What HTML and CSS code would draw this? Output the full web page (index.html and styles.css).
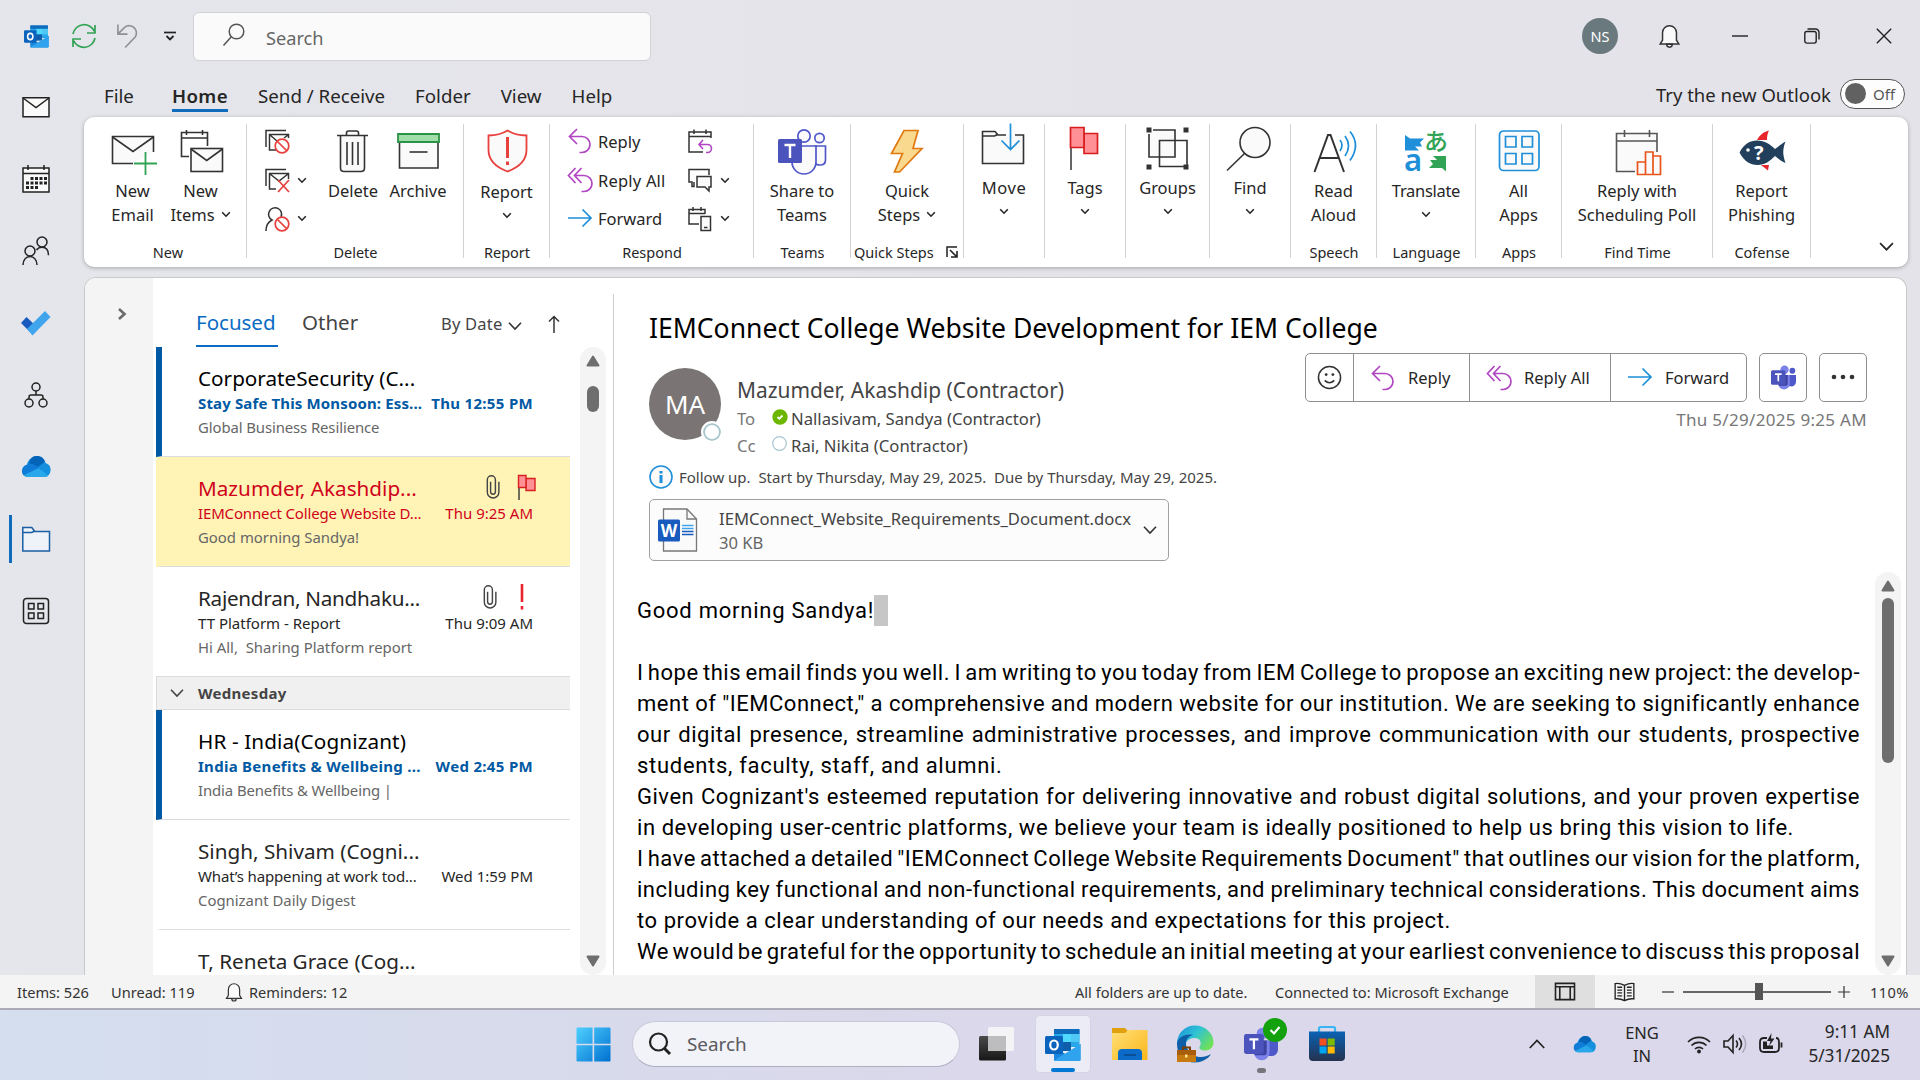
FILE: index.html
```html
<!DOCTYPE html>
<html lang="en">
<head>
<meta charset="utf-8">
<title>Inbox - Outlook</title>
<link rel="stylesheet" href="styles.css">
</head>
<body>
<svg class="defs" aria-hidden="true">
  <defs>
    <linearGradient id="win" x1="0" y1="0" x2="1" y2="1"><stop offset="0" stop-color="#4fd0ff"/><stop offset="1" stop-color="#0070d0"/></linearGradient>
    <linearGradient id="fold" x1="0" y1="0" x2="1" y2="1"><stop offset="0" stop-color="#ffe07a"/><stop offset="1" stop-color="#fbb616"/></linearGradient>
    <linearGradient id="edge" x1="0" y1="0" x2="1" y2="0.6"><stop offset="0" stop-color="#1a8fd8"/><stop offset=".5" stop-color="#2fc2d6"/><stop offset="1" stop-color="#6fe05a"/></linearGradient>
    <linearGradient id="store" x1="0" y1="0" x2="0" y2="1"><stop offset="0" stop-color="#0a62b4"/><stop offset="1" stop-color="#24324f"/></linearGradient>
    <linearGradient id="dark" x1="0" y1="0" x2="0" y2="1"><stop offset="0" stop-color="#4a4a4a"/><stop offset="1" stop-color="#171717"/></linearGradient>
    <symbol id="chev" viewBox="0 0 10 7"><path d="M1.200 1.200 5 5.200 8.800 1.200" fill="none" stroke="currentColor" stroke-width="1.600"/></symbol>
    <symbol id="chevthin" viewBox="0 0 14 10"><path d="M1 1.800 7 8 13 1.800" fill="none" stroke="currentColor" stroke-width="1.600"/></symbol>
    <symbol id="reply" viewBox="0 0 26 26"><path d="M10 1 2.500 8.500 10 16M2.500 8.500H15a8 8 0 0 1 0 16h-2.500" fill="none" stroke="#b146c2" stroke-width="1.700"/></symbol>
    <symbol id="replyall" viewBox="0 0 26 26"><path d="M8.500 1 1.500 8.500 8.500 16M14.500 1 7.500 8.500 14.500 16M7.500 8.500H17a8 8 0 0 1 0 16h-2.500" fill="none" stroke="#b146c2" stroke-width="1.700"/></symbol>
    <symbol id="forward" viewBox="0 0 26 26"><path d="M1 12H24M15.500 3.500 24 12 15.500 20.500" fill="none" stroke="#1e8fd8" stroke-width="1.700"/></symbol>
    <symbol id="cloud" viewBox="0 0 32 24"><path d="M7 23a7 7 0 0 1-1-13.500C8 3 13 0 17 0c5 0 8.500 3 9.500 7.500A8 8 0 0 1 25 23z" fill="#1490df"/><path d="M8 8C10 2 13 0 17 0c4.500 0 7.500 2.500 8.500 6.500L18 12z" fill="#0364b8"/><path d="M6 9.500c3-1.500 6-1 8 0l8 5L3 21.500A7 7 0 0 1 6 9.500z" fill="#0f7cd8"/><path d="M2.500 21 19 13l10.500 8.500c-1 1-2.500 1.500-4.500 1.500H7c-2 0-3.500-.8-4.500-2z" fill="#28a8ea"/></symbol>
    <symbol id="outlook" viewBox="0 0 36 36"><path d="M10 2h23a1.500 1.500 0 0 1 1.500 1.500V20H9V3.500A1.500 1.500 0 0 1 10 2z" fill="#28a8ea"/><path d="M9 2h25.500v5H9z" fill="#0f6cbd"/><path d="M18 7h8v8h-8z" fill="#50d9ff"/><path d="M26 7h8.500v8H26z" fill="#50c8f5"/><path d="M9 15h17v9H9z" fill="#0f5eab"/><path d="M9 20 22 28 35.500 17v15.500A1.500 1.500 0 0 1 34 34H10.500A1.500 1.500 0 0 1 9 32.500z" fill="#1687dc"/><path d="M35.500 17 9 33.500c.5.500 1 .5 1.500.5H34a1.500 1.500 0 0 0 1.500-1.500z" fill="#2fa3ee"/><rect x="0" y="9" width="18" height="18" rx="1.500" fill="#0a64bd"/><ellipse cx="9" cy="18" rx="3.800" ry="4.500" fill="none" stroke="#fff" stroke-width="2.200"/></symbol>
    <symbol id="teams" viewBox="0 0 24 24"><circle cx="13" cy="4.500" r="4" fill="#7b83eb"/><circle cx="20.500" cy="5.500" r="2.800" fill="#5059c9"/><path d="M16 9.500h8V16a4.500 4.500 0 0 1-5 4.500h-3z" fill="#5059c9"/><path d="M7 9.500h11V18a5.500 5.500 0 0 1-11 0z" fill="#7b83eb"/><path d="M7 9.500h9V18q0 2-2 2H7.500z" fill="#3c43a0"/><rect y="5" width="14" height="14" rx="1.500" fill="#4b53bc"/><path d="M3.800 8.700h6.400M7 8.700v7" stroke="#fff" stroke-width="1.600"/></symbol>
    <symbol id="clip" viewBox="0 0 14 26"><path d="M4.500 8v10.500a2.500 2.500 0 0 0 5 0V6a4.200 4.200 0 0 0-8.400 0v13a6 6 0 0 0 12 0V8" fill="none" stroke="#444" stroke-width="1.500"/></symbol>
    <symbol id="bell" viewBox="0 0 24 28"><path d="M2 22.500h20l-2.500-4V10.500a7.500 7.500 0 0 0-15 0v8z" fill="#fafafa" stroke="#333" stroke-width="1.600"/><path d="M9 23a3 3 0 0 0 6 0z" fill="#fafafa" stroke="#333" stroke-width="1.600"/></symbol>
    <symbol id="no" viewBox="0 0 16 16"><circle cx="8" cy="8" r="6.800" fill="#fff" stroke="#e8403c" stroke-width="1.700"/><path d="M3.500 3.500l9 9" stroke="#e8403c" stroke-width="1.700"/></symbol>
    <symbol id="up" viewBox="0 0 14 12"><path d="M7 1.500 12.500 10.500H1.500z" fill="#6e6e6e" stroke="#6e6e6e" stroke-width="2" stroke-linejoin="round"/></symbol>
    <symbol id="flag" viewBox="0 0 30 44"><path d="M2 2v42" stroke="#333" stroke-width="1.500"/><path d="M15 7.500h13.500v20H15z" fill="#ff9095" stroke="#d81e1e" stroke-width="1.700"/><path d="M1.500 1.500H15v20H1.500z" fill="#ff9095" stroke="#d81e1e" stroke-width="1.700"/></symbol>
  </defs>
</svg>

<div class="app">
  <header class="titlebar">
    <div class="quick">
      <svg class="q-outlook"><use href="#outlook"/></svg>
      <svg class="q-sync" viewBox="0 0 26 26"><path d="M2 11A11.300 11.300 0 0 1 23.500 8.500M24 2v8h-8M24 15A11.300 11.300 0 0 1 2.500 17.500M2 24v-8h8" fill="none" stroke="#31a354" stroke-width="1.700"/></svg>
      <svg class="q-undo" viewBox="0 0 24 26"><path d="M2 1v10h10M2.500 10.500 9 4a7.500 7.500 0 0 1 11 10L9.500 25" fill="none" stroke="#909094" stroke-width="1.700"/></svg>
      <svg class="q-more" viewBox="0 0 12 12"><path d="M0 2.500h12" stroke="#222" stroke-width="1.700"/><path d="M2.500 6 6 9.500 9.500 6" fill="none" stroke="#222" stroke-width="1.800"/></svg>
    </div>
    <div class="searchbox">
      <svg class="s-icon" viewBox="0 0 24 24"><circle cx="14.500" cy="8.500" r="7.300" fill="none" stroke="#555" stroke-width="1.500"/><path d="M9.300 13.700 1.500 22.500" stroke="#555" stroke-width="1.500"/></svg>
      <span>Search</span>
    </div>
    <div class="winctl">
      <span class="me">NS</span>
      <svg class="w-bell"><use href="#bell"/></svg>
      <svg class="w-btn" viewBox="0 0 16 16"><path d="M0 8h16" stroke="#222" stroke-width="1.400"/></svg>
      <svg class="w-btn" viewBox="0 0 16 16"><path d="M3.500 1h8A3.500 3.500 0 0 1 15 4.500v7" fill="none" stroke="#222" stroke-width="1.400"/><rect x=".8" y="3.500" width="11.400" height="11.600" rx="2" fill="none" stroke="#222" stroke-width="1.400"/></svg>
      <svg class="w-btn" viewBox="0 0 16 16"><path d="M.8.8 15.200 15.200M15.200.8.8 15.200" stroke="#222" stroke-width="1.400"/></svg>
    </div>
  </header>

  <div class="middle">
    <nav class="rail">
      <div><svg viewBox="0 0 32 32" class="r-ic"><path d="M3 6.700h26v19H3z" fill="#fafafa" stroke="#222" stroke-width="1.500"/><path d="M3 7l13 9.500L29 7" fill="none" stroke="#222" stroke-width="1.500"/></svg></div>
      <div><svg viewBox="0 0 32 32" class="r-ic"><path d="M3 5h26v24H3z" fill="#fafafa" stroke="#222" stroke-width="1.500"/><path d="M3 10.500h26M8 2v5M24 2v5" stroke="#222" stroke-width="1.500"/><path d="M10.500 15.500h16.500M6 20h21M6 24.500h12" stroke="#222" stroke-width="3" stroke-dasharray="3 1.500"/></svg></div>
      <div><svg viewBox="0 0 32 32" class="r-ic"><g fill="none" stroke="#222" stroke-width="1.500"><circle cx="10" cy="16" r="5"/><path d="M3 30c0-5 3-8.500 7-8.500s7 3.500 7 8.500"/><circle cx="22" cy="7" r="5"/><path d="M16.500 15c1.500-2 3-2.700 5.500-2.700 4 0 6.500 3 6.500 8"/></g></svg></div>
      <div><svg viewBox="0 0 32 32" class="r-ic"><path d="M1 16l5.500-6 9.500 9-6 6z" fill="#185abd"/><path d="M9.500 25 7 22 25 4l5.500 6-18 18.500z" fill="#41a5ee"/></svg></div>
      <div><svg viewBox="0 0 32 32" class="r-ic"><g fill="none" stroke="#222" stroke-width="1.500"><circle cx="16" cy="8" r="4"/><circle cx="9" cy="24" r="4"/><circle cx="23" cy="24" r="4"/><path d="M16 12v4M9 20v-2q0-2 2-2h10q2 0 2 2v2"/></g></svg></div>
      <div><svg viewBox="0 0 32 32" class="r-ic"><use href="#cloud" x="0" y="5" width="32" height="22"/></svg></div>
      <div class="on"><svg viewBox="0 0 32 32" class="r-ic"><path d="M2.800 4.500h9l3 4H29.500v19.500H2.800z" fill="#eef3f9" stroke="#1a5fa5" stroke-width="1.500"/><path d="M2.800 9.500h9l3-1.500" fill="none" stroke="#1a5fa5" stroke-width="1.500"/></svg></div>
      <div><svg viewBox="0 0 32 32" class="r-ic"><g fill="none" stroke="#222" stroke-width="1.500"><rect x="3.500" y="3.500" width="25" height="25" rx="3"/><path d="M8.500 8.500h5.500v5.500H8.500zM18 8.500h5.500v5.500H18zM8.500 18h5.500v5.500H8.500zM18 18h5.500v5.500H18z"/></g></svg></div>
    </nav>

    <div class="stage">
      <div class="tabs">
        <span>File</span><b>Home</b><span>Send / Receive</span><span>Folder</span><span>View</span><span>Help</span>
        <div class="trynew"><span>Try the new Outlook</span><span class="toggle"><i></i>Off</span></div>
      </div>

      <section class="ribbon">
        <div class="grp g-new">
          <div class="gb">
            <div class="big"><svg class="ic" viewBox="0 0 48 48"><path d="M44.500 24V8.500H3.500v27H24" fill="#fafafa" stroke="#333" stroke-width="1.600"/><path d="M3.500 9 24 23.500 44.500 9" fill="none" stroke="#333" stroke-width="1.600"/><path d="M36.500 24v23M25 35.500h23" stroke="#31a354" stroke-width="1.800"/></svg><span>New</span><span>Email</span></div>
            <div class="big b-items"><svg class="ic" viewBox="0 0 48 48"><path d="M12 28.500H4.500V4.500h26V18M4.500 10h26M9.500 2v5M25.500 2v5" fill="none" stroke="#333" stroke-width="1.600"/><rect x="14" y="20.500" width="31.500" height="23" fill="#fafafa" stroke="#333" stroke-width="1.600"/><path d="M14 21l15.700 11.500L45.500 21" fill="none" stroke="#333" stroke-width="1.600"/></svg><span>New</span><span>Items <svg class="cv"><use href="#chev"/></svg></span></div>
          </div>
          <div class="gl">New</div>
        </div>
        <div class="grp g-del">
          <div class="gb">
            <div class="small s1">
              <div><svg class="sm" viewBox="0 0 26 26"><path d="M2 19V2.500h20" fill="none" stroke="#333" stroke-width="1.500"/><path d="M12 22H5.500V6.500h19V10M6 7l7 6M24 7l-4 3" fill="none" stroke="#333" stroke-width="1.500"/><use href="#no" x="10" y="10" width="16" height="16"/></svg></div>
              <div><svg class="sm" viewBox="0 0 26 26"><path d="M2 19V2.500h20" fill="none" stroke="#333" stroke-width="1.500"/><path d="M12 22H5.500V6.500h19V12M6 7l9 7L24 7" fill="none" stroke="#333" stroke-width="1.500"/><path d="M14 13l11 12M25 13 14 25" stroke="#e8403c" stroke-width="1.700"/></svg><svg class="cv"><use href="#chev"/></svg></div>
              <div><svg class="sm" viewBox="0 0 26 26"><path d="M2 25c0-6 2-9 6-11A6.500 6.500 0 1 1 17 11" fill="none" stroke="#333" stroke-width="1.500"/><use href="#no" x="10" y="10" width="16" height="16"/></svg><svg class="cv"><use href="#chev"/></svg></div>
            </div>
            <div class="big b-del"><svg class="ic" viewBox="0 0 48 48"><path d="M11.500 8h24v32q0 3.500-3.500 3.500H15q-3.500 0-3.500-3.500z" fill="#fafafa"/><path d="M8 7.500h31M17.500 7V5q0-2 2-2h8q2 0 2 2v2M11.500 8v32q0 3.500 3.500 3.500h17q3.500 0 3.500-3.500V8M18 14v23M23.500 14v23M29 14v23" fill="none" stroke="#333" stroke-width="1.600"/></svg><span>Delete</span></div>
            <div class="big"><svg class="ic" viewBox="0 0 48 48"><path d="M5.500 14v26h38.500V14" fill="#fafafa" stroke="#333" stroke-width="1.600"/><path d="M4 6h41v8H4z" fill="#a1dda8" stroke="#2b9345" stroke-width="1.800"/><path d="M15.500 24h18" stroke="#333" stroke-width="1.600"/></svg><span>Archive</span></div>
          </div>
          <div class="gl">Delete</div>
        </div>
        <div class="grp g-rep">
          <div class="gb"><div class="big lo"><svg class="ic" viewBox="0 0 48 48"><path d="M24.500 2.500C19 6 13 7.500 5.500 7.500V22c0 10 7 17 19 21.500C36.500 39 43.500 32 43.500 22V7.500C36 7.500 30 6 24.500 2.500z" fill="#fafafa" stroke="#e8403c" stroke-width="1.800"/><path d="M24.500 9v21M24.500 33.500v3.500" stroke="#e8403c" stroke-width="3"/></svg><span>Report</span><svg class="cv"><use href="#chev"/></svg></div></div>
          <div class="gl">Report</div>
        </div>
        <div class="grp g-resp">
          <div class="gb">
            <div class="small s2">
              <div><svg class="sm"><use href="#reply"/></svg><span>Reply</span></div>
              <div><svg class="sm"><use href="#replyall"/></svg><span class="ra">Reply All</span></div>
              <div><svg class="sm"><use href="#forward"/></svg><span>Forward</span></div>
            </div>
            <div class="small s3">
              <div><svg class="sm" viewBox="0 0 26 26"><path d="M16 24H2V4h22v6M2 8.500h22M7 1.500V6M19 1.500V6" fill="none" stroke="#333" stroke-width="1.500"/><path d="M16 12l-4 4.500 4 4.500M12 16.500h8.500a4 4 0 0 1 0 8H19" fill="none" stroke="#b146c2" stroke-width="1.600"/></svg></div>
              <div><svg class="sm" viewBox="0 0 26 26"><path d="M7 15v4.500H5V15H2V2.500h20V8" fill="none" stroke="#333" stroke-width="1.500"/><path d="M10 9.500h14V20h-2v4l-4-4h-8z" fill="#fafafa" stroke="#333" stroke-width="1.500"/></svg><svg class="cv"><use href="#chev"/></svg></div>
              <div><svg class="sm" viewBox="0 0 26 26"><path d="M12 18H2V3.500h16V8M2 7.500h16M6 1v4M14 1v4" fill="none" stroke="#333" stroke-width="1.500"/><rect x="14" y="10.500" width="9.500" height="14" fill="#fafafa" stroke="#333" stroke-width="1.500"/><path d="M17 21.500h3.500" stroke="#333" stroke-width="1.500"/></svg><svg class="cv"><use href="#chev"/></svg></div>
            </div>
          </div>
          <div class="gl">Respond</div>
        </div>
        <div class="grp g-teams">
          <div class="gb"><div class="big"><svg class="ic" viewBox="0 0 48 48"><g fill="#fafafa" stroke="#5059c9" stroke-width="1.700"><circle cx="26" cy="8" r="6.200"/><circle cx="41.500" cy="10" r="4.700"/><path d="M37 18h10.500v14q0 5-5.500 5-4 0-5-2z"/><path d="M14 18h24v16a12 12 0 0 1-24 0z"/></g><rect x="0" y="11" width="24" height="24" rx="1.500" fill="#4b53bc"/><path d="M6.500 17h11M12 17v13" stroke="#fff" stroke-width="2.400"/></svg><span>Share to</span><span>Teams</span></div></div>
          <div class="gl">Teams</div>
        </div>
        <div class="grp g-quick">
          <div class="gb"><div class="big"><svg class="ic" viewBox="0 0 48 48"><path d="M21 2.500h14L30 20.500h9L16.500 44h-5l8-18.500H8.500z" fill="#f8d98e" stroke="#e07a10" stroke-width="1.700"/></svg><span>Quick</span><span>Steps <svg class="cv"><use href="#chev"/></svg></span></div></div>
          <div class="gl gl-q"><span>Quick Steps</span><svg class="launch" viewBox="0 0 12 12"><path d="M1 11V1h10" fill="none" stroke="#222" stroke-width="1.500"/><path d="M4 4l6.500 6.500M11 5v6H5" fill="none" stroke="#222" stroke-width="1.600"/></svg></div>
        </div>
        <div class="grp g-81"><div class="gb"><div class="big hi"><svg class="ic" viewBox="0 0 48 48"><path d="M27 7H19l-3-3.500H3.500v32h41V7H36" fill="#fafafa" stroke="#333" stroke-width="1.600"/><path d="M3.500 8h12l3-1.500" fill="none" stroke="#333" stroke-width="1.600"/><path d="M31.500-4.500v26M22.500 12.500l9 9 9-9" fill="none" stroke="#1e8fd8" stroke-width="1.700"/></svg><span class="mv">Move</span><svg class="cv"><use href="#chev"/></svg></div></div></div>
        <div class="grp g-81"><div class="gb"><div class="big hi"><svg class="ic" viewBox="0 0 48 48"><use href="#flag" x="9" y="-2" width="30" height="44"/></svg><span>Tags</span><svg class="cv"><use href="#chev"/></svg></div></div></div>
        <div class="grp g-84"><div class="gb"><div class="big hi"><svg class="ic" viewBox="0 0 48 48"><path d="M6 6V29h26V2H10" fill="#fafafa" stroke="#333" stroke-width="1.600"/><path d="M16.500 12.500H44v26H16.500z" fill="none" stroke="#333" stroke-width="1.600"/><path d="M3.500-.5h5v5h-5zM40.500-.5h5v5h-5zM3.500 36.500h5v5h-5zM40.500 36.500h5v5h-5z" fill="#333"/></svg><span>Groups</span><svg class="cv"><use href="#chev"/></svg></div></div></div>
        <div class="grp g-81"><div class="gb"><div class="big hi"><svg class="ic" viewBox="0 0 48 48"><circle cx="30" cy="14.500" r="15" fill="#fafafa" stroke="#333" stroke-width="1.600"/><path d="M19.500 25.500 2 42.500" stroke="#333" stroke-width="1.600"/></svg><span>Find</span><svg class="cv"><use href="#chev"/></svg></div></div></div>
        <div class="grp g-speech"><div class="gb"><div class="big"><svg class="ic" viewBox="0 0 48 48"><path d="M4.500 44 18 7h2.500L34 44M9.500 30h19.500" fill="none" stroke="#333" stroke-width="2"/><path d="M30 12q4 5 0 11M35 8q7 9.500 0 20M40 3.500q11 13.500 0 29" fill="none" stroke="#1e8fd8" stroke-width="1.700"/></svg><span>Read</span><span>Aloud</span></div></div><div class="gl">Speech</div></div>
        <div class="grp g-lang"><div class="gb"><div class="big"><svg class="ic" viewBox="0 0 48 48"><path d="M3 7l5 3.500h14l-4 4 2 4H13l4 4H3z" fill="#1e8fd8"/><path d="M44 43.500l-4-3.500H27l4-4-3-4h7l-4-4h13z" fill="#31a354"/><text x="2" y="43" class="t-a">a</text><text x="22" y="22" class="t-ja">あ</text></svg><span class="tr">Translate</span><svg class="cv cv-l"><use href="#chev"/></svg></div></div><div class="gl">Language</div></div>
        <div class="grp g-apps"><div class="gb"><div class="big"><svg class="ic" viewBox="0 0 48 48"><g fill="#fafafa" stroke="#1e8fd8" stroke-width="1.700"><rect x="4.500" y="3" width="39.500" height="39.500" rx="4"/><path d="M10.500 8.500h10.500v10.500H10.500zM27 8.500h10.500v10.500H27zM10.500 25.500h10.500V36H10.500zM27 25.500h10.500V36H27z"/></g></svg><span>All</span><span>Apps</span></div></div><div class="gl">Apps</div></div>
        <div class="grp g-poll"><div class="gb"><div class="big"><svg class="ic" viewBox="0 0 48 48"><path d="M22 43.500H3.500V5.500H44V24" fill="#fafafa" stroke="#555" stroke-width="1.600"/><path d="M3.500 13H44M11.500 2v7M36.500 2v7" stroke="#555" stroke-width="1.600"/><path d="M24.500 34h8v12.500h-8zM32.500 24h7.500v22.500h-7.500zM40 28h7.500v18.500H40z" fill="#fafafa" stroke="#e8541a" stroke-width="1.700"/></svg><span>Reply with</span><span>Scheduling Poll</span></div></div><div class="gl">Find Time</div></div>
        <div class="grp g-cof"><div class="gb"><div class="big"><svg class="ic" viewBox="0 0 48 48"><path d="M19 12C22 7 25 4 31 2.500c-1.500 3-2 6-2 9.500zM23 37h8l-1 5.500z" fill="#e8242c"/><path d="M1.500 24.500C6 16 12 12.500 19 12.500c8 0 13 4 18 8.500 3-2 6-5 10.500-7.500-3 8-3 13 0 21.500-4.500-2-7.500-4.500-10.500-7C32 33 27 37 19.500 37 12 37 6 33 1.500 24.500z" fill="#22405c"/><circle cx="10" cy="22" r="1.800" fill="#fff"/><text x="16" y="32" class="t-q">?</text></svg><span>Report</span><span>Phishing</span></div></div><div class="gl">Cofense</div></div>
        <div class="ribend"><svg class="cvb"><use href="#chevthin"/></svg></div>
      </section>

      <main class="panel">
        <div class="folders"><svg class="exp" viewBox="0 0 10 12"><path d="M2 1l5.500 5L2 11" fill="none" stroke="#6a6a6a" stroke-width="2.600"/></svg></div>
        <section class="list">
          <div class="lhead">
            <span class="foc">Focused</span><span class="oth">Other</span>
            <span class="by">By Date</span><svg class="cvd"><use href="#chevthin"/></svg>
            <svg class="asc" viewBox="0 0 12 18"><path d="M6 18V1.500M1 6.500 6 1.500l5 5" fill="none" stroke="#333" stroke-width="1.500"/></svg>
          </div>
          <div class="lbody">
            <div class="msgs">
              <article class="msg unread"><h3>CorporateSecurity (C...</h3><div class="sub"><span class="n1">Stay Safe This Monsoon: Ess...</span><time>Thu 12:55 PM</time></div><p>Global Business Resilience</p></article>
              <article class="msg sel"><h3>Mazumder, Akashdip...<span class="mk"><svg class="m-clip"><use href="#clip"/></svg><svg class="m-flag" viewBox="0 0 20 26"><path d="M2 2v24" stroke="#333" stroke-width="1.400"/><path d="M9 4.500h9v12H9z" fill="#ff9095" stroke="#d81e1e" stroke-width="1.400"/><path d="M1.500 1.500H9v12H1.500z" fill="#ff9095" stroke="#d81e1e" stroke-width="1.400"/></svg></span></h3><div class="sub tightsub"><span>IEMConnect College Website D...</span><time>Thu 9:25 AM</time></div><p>Good morning Sandya!</p></article>
              <article class="msg"><h3 class="snug">Rajendran, Nandhaku...<span class="mk"><svg class="m-clip"><use href="#clip"/></svg><svg class="m-imp" viewBox="0 0 20 26"><path d="M8 0v18M8 22v3.500" stroke="#e8242c" stroke-width="2.600"/></svg></span></h3><div class="sub"><span>TT Platform - Report</span><time>Thu 9:09 AM</time></div><p class="pre">Hi All,  Sharing Platform report</p></article>
              <div class="day"><svg class="cvw"><use href="#chevthin"/></svg><b>Wednesday</b></div>
              <article class="msg unread"><h3 class="loose">HR - India(Cognizant)</h3><div class="sub widesub"><span>India Benefits &amp; Wellbeing ...</span><time>Wed 2:45 PM</time></div><p>India Benefits &amp; Wellbeing |</p></article>
              <article class="msg"><h3>Singh, Shivam (Cogni...</h3><div class="sub tightsub"><span>What’s happening at work tod...</span><time>Wed 1:59 PM</time></div><p>Cognizant Daily Digest</p></article>
              <article class="msg"><h3>T, Reneta Grace (Cog...</h3></article>
            </div>
            <div class="sbar"><svg class="tri"><use href="#up"/></svg><i class="th1"></i><svg class="tri down"><use href="#up"/></svg></div>
          </div>
        </section>

        <section class="read">
          <h1>IEMConnect College Website Development for IEM College</h1>
          <div class="mhead">
            <div class="avatar">MA<i></i></div>
            <div class="who">
              <div class="from">Mazumder, Akashdip (Contractor)</div>
              <div class="to"><em>To</em><svg class="ok" viewBox="0 0 16 16"><circle cx="8" cy="8" r="7.700" fill="#6bb700"/><path d="M5.500 8l1.800 1.800L10.500 6.500" fill="none" stroke="#fff" stroke-width="1.800"/></svg><span>Nallasivam, Sandya (Contractor)</span></div>
              <div class="to cc"><em>Cc</em><svg class="ok" viewBox="0 0 16 16"><circle cx="7.500" cy="7.500" r="6.800" fill="#fff" stroke="#a9c5d0" stroke-width="1.200"/></svg><span>Rai, Nikita (Contractor)</span></div>
            </div>
            <div class="acts">
              <div class="btns">
                <div class="bgrp">
                  <div class="bt b1"><svg class="smile" viewBox="0 0 26 26"><g fill="none" stroke="#333" stroke-width="1.600"><circle cx="13" cy="13" r="11.500"/><path d="M8 16q5 5 10 0"/></g><circle cx="9.500" cy="10" r="1.500" fill="#333"/><circle cx="16.500" cy="10" r="1.500" fill="#333"/></svg></div>
                  <div class="bt b2"><svg class="sm"><use href="#reply"/></svg><span>Reply</span></div>
                  <div class="bt b3"><svg class="sm"><use href="#replyall"/></svg><span>Reply All</span></div>
                  <div class="bt b4"><svg class="sm"><use href="#forward"/></svg><span>Forward</span></div>
                </div>
                <div class="sq"><svg class="tm"><use href="#teams"/></svg></div>
                <div class="sq"><svg class="dots" viewBox="0 0 24 6"><circle cx="3" cy="3" r="2.300"/><circle cx="12" cy="3" r="2.300"/><circle cx="21" cy="3" r="2.300"/></svg></div>
              </div>
              <div class="date">Thu 5/29/2025 9:25 AM</div>
            </div>
          </div>
          <div class="follow"><svg class="info" viewBox="0 0 24 24"><circle cx="12" cy="12" r="11" fill="#fafafa" stroke="#1e8fd8" stroke-width="1.600"/><path d="M12 10v8M12 6v2.500" stroke="#1e8fd8" stroke-width="3"/></svg><span class="pre">Follow up.  Start by Thursday, May 29, 2025.  Due by Thursday, May 29, 2025.</span></div>
          <div class="attach">
            <svg class="word" viewBox="0 0 40 44"><path d="M5.500 1H29l9.500 10v32H5.500z" fill="#fafafa" stroke="#777" stroke-width="1.300"/><path d="M29 1v10h9.500" fill="none" stroke="#777" stroke-width="1.300"/><path d="M24 17.500h11.500M24 20.500h11.500" stroke="#41a5ee" stroke-width="1.400"/><path d="M24 23.500h11.500M24 26.500h11.500" stroke="#185abd" stroke-width="1.400"/><rect y="11.500" width="22" height="22" rx="1.500" fill="#185abd"/><text x="11" y="28.500" text-anchor="middle" class="t-w">W</text></svg>
            <div class="fn"><span>IEMConnect_Website_Requirements_Document.docx</span><small>30 KB</small></div>
            <svg class="cvd"><use href="#chevthin"/></svg>
          </div>
          <div class="mbody">
            <div class="mail">
              <p><span class="cur">Good morning Sandya!</span></p>
              <p>&nbsp;</p>
              <p class="j tight">I hope this email finds you well. I am writing to you today from IEM College to propose an exciting new project: the develop-</p>
              <p class="j">ment of "IEMConnect," a comprehensive and modern website for our institution. We are seeking to significantly enhance</p>
              <p class="j">our digital presence, streamline administrative processes, and improve communication with our students, prospective</p>
              <p class="short">students, faculty, staff, and alumni.</p>
              <p class="j">Given Cognizant's esteemed reputation for delivering innovative and robust digital solutions, and your proven expertise</p>
              <p class="end">in developing user-centric platforms, we believe your team is ideally positioned to help us bring this vision to life.</p>
              <p class="j tight">I have attached a detailed "IEMConnect College Website Requirements Document" that outlines our vision for the platform,</p>
              <p class="j tight">including key functional and non-functional requirements, and preliminary technical considerations. This document aims</p>
              <p class="end">to provide a clear understanding of our needs and expectations for this project.</p>
              <p class="j tight">We would be grateful for the opportunity to schedule an initial meeting at your earliest convenience to discuss this proposal</p>
            </div>
            <div class="sbar"><svg class="tri"><use href="#up"/></svg><i class="th2"></i><svg class="tri down"><use href="#up"/></svg></div>
          </div>
        </section>
      </main>
    </div>
  </div>

  <footer class="status">
    <span class="st1">Items: 526</span><span class="st2">Unread: 119</span><svg class="s-bell"><use href="#bell"/></svg><span class="st0">Reminders: 12</span>
    <span class="st3">All folders are up to date.</span><span class="st4">Connected to: Microsoft Exchange</span>
    <span class="vw"><svg class="v1" viewBox="0 0 22 20"><path d="M1 1.500h20v17H1zM1 5h20M5.500 5v13.500M16.500 5v13.500" fill="none" stroke="#222" stroke-width="1.700"/></svg></span>
    <svg class="v2" viewBox="0 0 22 20"><path d="M11 3Q6 .5 1.200 1.200v16Q6 16.500 11 19q5-2.500 9.800-1.800v-16Q16 .5 11 3zM11 3v16M3.500 5h5M3.500 8h5M3.500 11h5M3.500 14h5M13.500 5h5M13.500 8h5M13.500 11h5M13.500 14h5" fill="none" stroke="#222" stroke-width="1.400"/></svg>
    <svg class="zm" viewBox="0 0 12 12"><path d="M0 6h12" stroke="#333" stroke-width="1.200"/></svg>
    <span class="slider"><i></i></span>
    <svg class="zm" viewBox="0 0 12 12"><path d="M0 6h12M6 0v12" stroke="#333" stroke-width="1.200"/></svg>
    <span class="pct">110%</span>
  </footer>

  <div class="taskbar">
    <svg class="t-start" viewBox="0 0 36 36"><path d="M1.500.5H17v16.700H.5V1.500a1 1 0 0 1 1-1zM18.700.5H34.500a1 1 0 0 1 1 1v15.700H18.700zM.5 18.800H17v16.700H1.500a1 1 0 0 1-1-1zM18.700 18.800h16.800v15.700a1 1 0 0 1-1 1H18.700z" fill="url(#win)"/></svg>
    <div class="tsearch"><svg class="ts-ic" viewBox="0 0 24 24"><circle cx="10.500" cy="10" r="8.500" fill="none" stroke="#222" stroke-width="2.200"/><path d="M16.500 16.500 22 22" stroke="#222" stroke-width="3"/></svg><span>Search</span></div>
    <svg class="t-view" viewBox="0 0 36 36"><rect x="0" y="10" width="27" height="24.500" rx="1.500" fill="url(#dark)"/><rect x="9" y="1" width="26" height="24" rx="1.500" fill="#f4f4f6"/><path d="M9 10h18v15H9z" fill="#bdbdc0"/></svg>
    <div class="t-tile"><svg class="t-out"><use href="#outlook"/></svg><i></i></div>
    <svg class="t-exp" viewBox="0 0 38 34"><path d="M1 1h13l3 3v5H1z" fill="#e0a010"/><path d="M1 6h13l3-3h19.500v30H1z" fill="url(#fold)"/><path d="M7 33V26q0-4 4-4h16q4 0 4 4v7z" fill="#0a6cc8"/><path d="M13 28h12" stroke="#0b4f98" stroke-width="2"/></svg>
    <svg class="t-edge" viewBox="0 0 38 38"><path d="M1 19C1 8 9 .5 19 .5S37.500 8 37.500 17.500c0 5-4 8-8 8-6 0-7-2.500-5.500-4.500 1.500-2.500 1-8-5.500-8-8 0-11 7-10 14z" fill="url(#edge)"/><path d="M1 19c0-6 8-11 16-9-7 1.500-9 9-5 15 5 8 15 9 23 4-3 5.500-10 8.500-16 8.500C8 37.500 1 30 1 19z" fill="#0f5ea8"/><path d="M1 25h19v12H1z" fill="#c57a10"/><path d="M1 25h19v5H1z" fill="#a85e08"/><path d="M7 25v-2.500h7V25" fill="none" stroke="#7a3e00" stroke-width="2"/><rect x="9" y="29.500" width="2.500" height="3" fill="#ffe28a"/></svg>
    <div class="t-teams"><svg class="t-tm"><use href="#teams"/></svg><svg class="badge" viewBox="0 0 24 24"><circle cx="12" cy="12" r="12" fill="#13a10e"/><path d="M7.500 12l3.500 3.500L16.500 9" fill="none" stroke="#fff" stroke-width="2.200"/></svg><i></i></div>
    <svg class="t-store" viewBox="0 0 36 36"><path d="M10 7V2.500q0-1.500 1.500-1.500h13q1.500 0 1.500 1.500V7" fill="none" stroke="#37b5f2" stroke-width="2.200"/><path d="M0 5.500h36V31q0 4-4 4H4q-4 0-4-4z" fill="url(#store)"/><path d="M10.500 12.500h7v7h-7z" fill="#f25022"/><path d="M18.700 12.500h7v7h-7z" fill="#7fba00"/><path d="M10.500 20.500h7v7h-7z" fill="#00a4ef"/><path d="M18.700 20.500h7v7h-7z" fill="#ffb900"/></svg>
    <div class="tray">
      <svg class="y-chev" viewBox="0 0 16 10"><path d="M.8 9 8 1.500 15.200 9" fill="none" stroke="#222" stroke-width="1.700"/></svg>
      <svg class="y-cloud"><use href="#cloud"/></svg>
      <div class="lang"><span>ENG</span><span>IN</span></div>
      <svg class="y-wifi" viewBox="0 0 24 20"><g fill="none" stroke="#222" stroke-width="1.600"><path d="M1 8a15.500 15.500 0 0 1 22 0M4.500 11.500a10.500 10.500 0 0 1 15 0M8 15a5.700 5.700 0 0 1 8 0"/></g><circle cx="12" cy="17.500" r="1.900" fill="#222"/></svg>
      <svg class="y-vol" viewBox="0 0 25 20"><path d="M1 7h4l5-5.500v17L5 13H1z" fill="none" stroke="#222" stroke-width="1.600"/><path d="M13 6.500q3 3.500 0 7M16 4q5 6 0 12" fill="none" stroke="#222" stroke-width="1.600"/><path d="M19.500 1.500q6.500 8.500 0 17" fill="none" stroke="#aaa9b8" stroke-width="1.600"/></svg>
      <svg class="y-bat" viewBox="0 0 24 20"><path d="M8 4H5Q1 4 1 8v6q0 4 4 4h11q4 0 4-4V8q0-4-3-4M22.500 8.500v5" fill="none" stroke="#222" stroke-width="1.800"/><path d="M4 7.500h4v4h6V15H4z" fill="#222"/><path d="M12.500-1 8 7h3.500L10 12l5.500-7.500H12z" fill="#222"/></svg>
      <div class="clock"><span>9:11 AM</span><span>5/31/2025</span></div>
    </div>
  </div>
</div>
</body>
</html>
```

FILE: styles.css
```css
* { box-sizing: border-box; }
body { margin: 0; width: 1920px; height: 1080px; overflow: hidden; background: #e4e4ea; color: #262626; font-family: "Noto Sans", "Open Sans", sans-serif; font-size: 16.500px; }
h1, h3, p { margin: 0; font-weight: 400; }
svg { display: block; flex: none; overflow: visible; }
.defs { width: 0; height: 0; position: absolute; }
.app { display: flex; flex-direction: column; height: 1080px; background: linear-gradient(90deg, #e4e6eb, #e5e3ea 60%); }

/* Title bar */
.titlebar { height: 72px; display: flex; align-items: center; flex: none; }
.quick { width: 193px; display: flex; align-items: center; padding-left: 24px; }
.q-outlook { width: 25px; height: 25px; }
.q-sync { width: 26px; height: 26px; margin-left: 22px; }
.q-undo { width: 23px; height: 26px; margin-left: 19px; }
.q-more { width: 12px; height: 12px; margin-left: 25px; }
.searchbox { width: 458px; height: 49px; margin-top: 1px; border: 1px solid #d2d2d6; border-radius: 6px; background: #fafafa; display: flex; align-items: center; padding-left: 28px; color: #666; font-size: 18.200px; }
.searchbox span { padding-top: 2px; }
.s-icon { width: 24px; height: 24px; margin: -3px 20px 0 0; }
.winctl { margin-left: auto; display: flex; align-items: center; padding-right: 28px; }
.me { width: 36px; height: 36px; border-radius: 50%; background: #69797e; color: #fff; font-size: 14.500px; line-height: 36px; text-align: center; }
.w-bell { width: 23px; height: 26px; margin: 0 35px 0 40px; }
.w-btn { width: 16px; height: 16px; margin-left: 56px; }
.w-bell + .w-btn { margin-left: 16px; }

/* Navigation rail */
.middle { display: flex; flex: none; height: 903px; }
.rail { width: 84px; padding-left: 9px; flex: none; }
.rail div { height: 72px; display: flex; align-items: center; padding-left: 11px; border-left: 3px solid transparent; }
.rail div:first-child { margin-top: -1px; padding-bottom: 0; }
.rail .on { height: 48px; margin: 12px 0; border-color: #0f6cbd; }
.r-ic { width: 32px; height: 32px; margin-left: -3px; }
.stage { width: 1836px; display: flex; flex-direction: column; }
.tabs { height: 45px; flex: none; display: flex; font-size: 18.700px; line-height: 26px; padding: 11px 0 0 20px; }
.tabs > span, .tabs > b { margin-right: 30px; height: 29px; white-space: nowrap; }
.tabs > b { margin-left: 8px; border-bottom: 3px solid #0f6cbd; font-weight: 600; letter-spacing: .4px; }
.trynew { margin-left: auto; display: flex; align-items: center; height: 30px; margin-top: -4px; padding-right: 15px; font-size: 18.500px; }
.trynew > span:first-child { padding-top: 2px; }
.toggle { width: 65px; height: 30px; margin-top: -1px; border: 1px solid #555; border-radius: 15px; background: #fdfdfd; display: flex; align-items: center; gap: 7px; padding-left: 4px; margin-left: 9px; font-size: 15px; color: #555; }
.toggle i { width: 21px; height: 21px; border-radius: 50%; background: #616161; }

/* Ribbon */
.ribbon { width: 1824px; height: 150px; flex: none; background: #fff; border-radius: 10px; box-shadow: 0 1px 4px rgba(0,0,0,.28); display: flex; padding-left: 1px; }
.grp { display: flex; flex-direction: column; width: 86px; flex: none; background: linear-gradient(#d2d2d2, #d2d2d2) right 7px / 1px 134px no-repeat; }
.gb { height: 125px; display: flex; justify-content: center; padding-right: 1px; }
.gl { font-size: 14.500px; line-height: 20px; text-align: center; white-space: nowrap; }
.big { display: flex; flex-direction: column; align-items: center; padding-top: 11px; width: 66px; line-height: 23.500px; white-space: nowrap; }
.big > span { display: flex; align-items: center; gap: 6px; flex: none; }
.mv { letter-spacing: .6px; }
.tr { letter-spacing: -.3px; }
.ic { width: 48px; height: 48px; margin-bottom: 3px; }
.lo .ic { margin-bottom: 4px; }
.hi .ic { margin: 0 2px 0 0; }
.cv { width: 10px; height: 7px; }
.big > .cv { margin-top: 8px; }
.small { padding-top: 5px; }
.small div { height: 38.700px; display: flex; align-items: center; white-space: nowrap; }
.sm { width: 26px; height: 26px; }
.s1 { width: 57px; }
.s1 .cv, .s3 .cv { margin-left: 7px; }
.s2 { width: 120px; }
.s2 .sm { margin-right: 5px; }
.ra { letter-spacing: .2px; }
.s3 { width: 56px; }
.g-new { width: 162px; }
.g-new .gb { padding: 0 0 0 1px; }
.g-new .gl { padding-left: 4px; }
.b-items { width: 68px; padding-left: 2px; }
.g-del { width: 217px; }
.g-del .gb, .g-resp .gb { justify-content: flex-start; padding-left: 17px; }
.b-del { width: 64px; }
.g-resp { width: 204px; }
.g-teams { width: 97px; }
.g-quick { width: 113px; }
.g-81 { width: 81px; }
.g-84 { width: 84px; }
.g-lang { width: 99px; }
.g-poll { width: 151px; }
.g-cof { width: 98px; }
.gl-q { display: flex; align-items: center; padding-left: 3px; gap: 12px; }
.launch { width: 12px; height: 12px; }
.t-a { font: 600 31px "Noto Sans", sans-serif; fill: #1e8fd8; }
.t-ja { font: 500 24px "Noto Sans CJK JP", sans-serif; fill: #31a354; }
.t-q { font: 700 20px "Noto Sans", sans-serif; fill: #fff; }
.t-w { font: 700 17px "Noto Sans", sans-serif; fill: #fff; }
.ribend { flex: 1; display: flex; justify-content: flex-end; align-items: flex-end; padding: 0 14px 15px 0; }
.cvb { width: 15px; height: 11px; }

/* Message list */
.panel { width: 1823px; margin: 10px 0 0 0; height: 698px; border: 1px solid #c9c9cc; border-bottom: 0; border-radius: 12px 12px 0 0; background: #fff; display: flex; overflow: hidden; }
.folders { width: 68px; background: #f4f4f4; padding: 30px 0 0 32px; flex: none; }
.exp { width: 10px; height: 12px; }
.list { width: 461px; flex: none; display: flex; flex-direction: column; background: linear-gradient(#cfcfcf, #cfcfcf) right 16px / 1px 700px no-repeat; }
.lhead { height: 69px; display: flex; align-items: flex-start; padding-left: 43px; white-space: nowrap; }
.foc, .oth { font-size: 20.500px; line-height: 28px; margin-top: 30px; height: 39px; }
.foc { color: #0a6cc4; border-bottom: 2px solid #0a6cc4; width: 82px; }
.oth { margin-left: 24px; color: #444; width: 56px; }
.by { margin: 34px 6px 0 83px; font-size: 16.500px; line-height: 24px; color: #444; letter-spacing: .2px; }
.lhead .cvd { margin-top: 43px; }
.cvd { width: 14px; height: 10px; color: #333; }
.asc { width: 12px; height: 18px; margin: 37px 0 0 26px; }
.lbody { display: flex; height: 628px; }
.msgs { width: 414px; margin-left: 3px; overflow: hidden; }
.msg { height: 110px; border-bottom: 1px solid #dcdcdc; padding: 17px 37px 0 36px; border-left: 6px solid transparent; white-space: nowrap; }
.msg h3 { font-size: 20.700px; line-height: 28px; display: flex; justify-content: space-between; }
.msg .snug { letter-spacing: -.28px; }
.msg .loose { letter-spacing: .12px; }
.mk { display: flex; }
.m-clip { width: 14px; height: 25px; margin-right: 17px; }
.m-flag { width: 20px; height: 26px; margin-right: -4px; }
.m-imp { width: 20px; height: 26px; margin-right: -1px; }
.sub { display: flex; justify-content: space-between; font-size: 15px; line-height: 22px; }
.tightsub span { letter-spacing: -.15px; }
.msg p { font-size: 14.900px; line-height: 27px; color: #666; }
.msg .pre, .pre { white-space: pre; }
.unread { border-left-color: #0059a3; }
.unread h3 { color: #000; }
.unread .sub { color: #0059a3; font-weight: 700; letter-spacing: .32px; }
.unread .n1 { letter-spacing: .14px; }
.unread .widesub span { letter-spacing: .28px; }
.unread p { letter-spacing: -.1px; }
.sel { background: #fff4b6; border-left-color: #fff4b6; }
.sel h3, .sel .sub { color: #d0021b; }
.day { height: 34px; margin-top: -1px; border: 1px solid #dcdcdc; border-right: 0; background: #f0f0f0; display: flex; align-items: center; padding-left: 13px; font-size: 15px; color: #444; letter-spacing: .3px; }
.cvw { width: 14px; height: 10px; margin-right: 14px; }
.sbar { width: 26px; border-radius: 13px; background: #f4f4f4; display: flex; flex-direction: column; align-items: center; padding: 8px 0; margin-left: 10px; flex: none; }
.tri { width: 14px; height: 12px; }
.down { margin-top: auto; transform: rotate(180deg); }
.th1 { width: 12px; height: 26px; border-radius: 6px; background: #6e6e6e; margin-top: 19px; }
.th2 { width: 12px; height: 165px; border-radius: 6px; background: #6e6e6e; margin-top: 6px; }

/* Reading pane */
.read { width: 1292px; display: flex; flex-direction: column; padding-left: 22px; }
h1 { font-size: 26.550px; line-height: 36px; padding: 32px 0 0 13px; color: #000; white-space: nowrap; }
.mhead { display: flex; padding-left: 13px; margin-top: 7px; height: 111px; }
.avatar { width: 72px; height: 72px; margin-top: 15px; border-radius: 50%; background: #7a7474; color: #fff; font-size: 26px; line-height: 72px; text-align: center; position: relative; flex: none; }
.avatar i { position: absolute; right: -2px; bottom: -3px; width: 22px; height: 22px; border-radius: 50%; background: #fff; border: 2px solid #fff; box-shadow: inset 0 0 0 2px #a9c5d0; }
.who { padding: 23px 0 0 16px; white-space: nowrap; color: #444; width: 460px; }
.from { font-size: 20.900px; line-height: 28px; }
.to { display: flex; align-items: center; height: 27px; font-size: 16.700px; margin-top: 1px; }
.to.cc { margin-top: 0; }
.to em { font-style: normal; color: #777; width: 35px; }
.ok { width: 16px; height: 16px; margin-right: 3px; margin-top: -3px; }
.acts { margin: 0 39px 0 auto; width: 514px; }
.btns { display: flex; gap: 12px; }
.bgrp { display: flex; height: 49px; border: 1px solid #8f8f8f; border-radius: 5px; width: 442px; margin-left: -48px; flex: none; }
.bt { display: flex; align-items: center; padding-left: 16px; gap: 12px; border-right: 1px solid #8f8f8f; white-space: nowrap; }
.b1 { width: 48px; padding-left: 11px; }
.b2 { width: 116px; }
.b3 { width: 141px; }
.b4 { border: 0; }
.smile, .tm { width: 25px; height: 25px; }
.sq { width: 48px; height: 49px; border: 1px solid #8f8f8f; border-radius: 5px; display: flex; align-items: center; justify-content: center; flex: none; }
.dots { width: 24px; height: 6px; margin-top: -2px; fill: #333; }
.date { color: #777; text-align: right; line-height: 36px; font-size: 17px; letter-spacing: .3px; }
.follow { display: flex; align-items: center; height: 24px; margin-top: 1px; padding-left: 13px; color: #444; font-size: 15px; }
.info { width: 24px; height: 24px; margin-right: 6px; }
.attach { margin: 10px 0 0 13px; width: 520px; height: 62px; border: 1px solid #a0a0a0; border-radius: 5px; background: #fcfcfc; display: flex; align-items: center; padding-left: 8px; color: #444; }
.word { width: 40px; height: 44px; margin-right: 21px; }
.fn { display: flex; flex-direction: column; line-height: 24px; width: 424px; font-size: 16.650px; padding-top: 1px; }
.fn small { font-size: 16.600px; color: #666; }
.mbody { display: flex; margin-top: 11px; height: 403px; }
.mail { width: 1225px; padding: 23px 1px 0; font-family: Roboto, "Liberation Sans", sans-serif; font-size: 22px; letter-spacing: .52px; line-height: 31px; color: #000; height: 403px; overflow: hidden; white-space: nowrap; }
.j { text-align: justify; text-align-last: justify; word-spacing: -.5px; }
.tight { word-spacing: -2.500px; }
.end { letter-spacing: .56px; }
.short { letter-spacing: .7px; }
.mbody .sbar { margin-left: 14px; padding: 8px 0; }
.cur { display: inline-block; border-right: 14px solid #c6c6c6; letter-spacing: .75px; }

/* Status bar */
.status { height: 35px; flex: none; background: #f4f4f4; border-bottom: 2px solid #acacb9; display: flex; align-items: center; font-size: 14.600px; white-space: nowrap; padding-left: 17px; color: #333; }
.st1 { width: 94px; }
.st2 { width: 114px; }
.s-bell { width: 18px; height: 22px; margin-right: 6px; }
.st0 { width: 826px; }
.st3 { width: 200px; }
.st4 { width: 260px; }
.vw { width: 60px; height: 33px; background: #dfdfdf; display: flex; align-items: center; justify-content: center; }
.v1 { width: 22px; height: 19px; }
.v2 { width: 21px; height: 20px; margin: 0 27px 0 19px; }
.zm { width: 12px; height: 12px; }
.slider { width: 148px; height: 2px; margin: 0 7px 0 9px; background: #666; display: flex; align-items: center; }
.slider i { width: 8px; height: 17px; margin-left: 72px; background: #555; }
.pct { margin-left: 20px; letter-spacing: .4px; }

/* Taskbar */
.taskbar { height: 70px; flex: none; display: flex; align-items: center; background: linear-gradient(90deg, #d4deee, #dad8ea 50%); padding: 0 0 2px 576px; }
.t-start { width: 35px; height: 35px; margin-top: 1px; }
.tsearch { width: 328px; height: 46px; margin-left: 21px; border-radius: 23px; background: #f2f2f9; border: 1px solid #c8c8da; border-bottom-color: #aeaec0; display: flex; align-items: center; padding-left: 15px; font-size: 18.900px; color: #5a5a60; }
.ts-ic { width: 24px; height: 24px; margin-right: 15px; }
.t-view { width: 36px; height: 36px; margin-left: 19px; }
.t-tile { width: 56px; height: 58px; margin-left: 20px; border-radius: 5px; background: #ececf6; border: 1px solid #d4d4e4; display: flex; flex-direction: column; align-items: center; padding-top: 11px; }
.t-out { width: 36px; height: 36px; }
.t-tile i { width: 24px; height: 5px; border-radius: 3px; background: #0078d4; margin-top: 5px; }
.t-exp { width: 38px; height: 34px; margin-left: 20px; }
.t-edge { width: 38px; height: 38px; margin-left: 27px; }
.t-teams { width: 45px; height: 58px; margin-left: 29px; position: relative; padding-top: 12px; }
.t-tm { width: 36px; height: 34px; }
.badge { position: absolute; left: 20px; top: 3px; width: 24px; height: 24px; }
.t-teams i { position: absolute; left: 14px; top: 53px; width: 9px; height: 5px; border-radius: 3px; background: #75757c; }
.t-store { width: 36px; height: 36px; margin-left: 21px; }
.tray { margin-left: auto; display: flex; align-items: center; padding-right: 30px; }
.y-chev { width: 16px; height: 10px; }
.y-cloud { width: 25px; height: 17px; margin-left: 27px; }
.lang { display: flex; flex-direction: column; align-items: center; width: 60px; line-height: 23px; margin: 0 29px 0 15px; }
.y-wifi { width: 24px; height: 20px; margin-left: -14px; }
.y-vol { width: 25px; height: 20px; margin-left: 12px; }
.y-bat { width: 24px; height: 20px; margin-left: 11px; }
.clock { display: flex; flex-direction: column; align-items: flex-end; line-height: 23.500px; width: 107px; font-size: 17.200px; padding-bottom: 1px; }
```
